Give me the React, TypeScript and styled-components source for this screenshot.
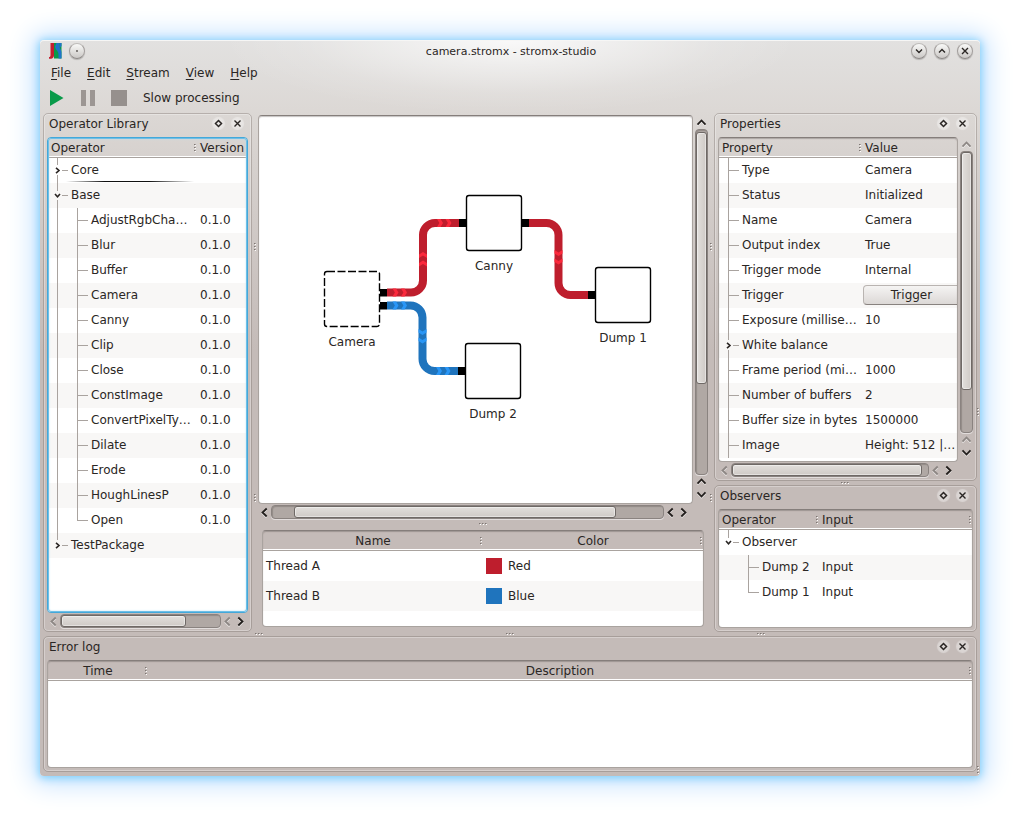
import React from 'react';
import styled, { createGlobalStyle, css } from 'styled-components';

const ink = '#2a2624';
const line = '#a9a39f';
const altRow = '#f8f7f6';

const GlobalStyle = createGlobalStyle`
  * { box-sizing: border-box; }
  body {
    margin: 0;
    background: #fff;
    color: ${ink};
    font: 12px/16px "DejaVu Sans", Verdana, sans-serif;
  }
  button { font: inherit; color: inherit; }
`;

const Desktop = styled.div`
  display: flex;
  min-height: 100vh;
  padding: 40px;
`;

const Window = styled.main`
  position: relative;
  flex: 1;
  min-width: 0;
  display: flex;
  flex-direction: column;
  padding: 0 3px 4px;
  border-radius: 4px;
  background:
    radial-gradient(
      ellipse 290px 74px at 50% 0,
      rgba(255, 255, 255, 0.8),
      rgba(255, 255, 255, 0.45) 35%,
      rgba(255, 255, 255, 0.12) 72%,
      rgba(255, 255, 255, 0)
    ),
    linear-gradient(#e2e1e0 0, #dcd8d5 70px, #d6d1ce 120px, #c4bbb8 310px);
  box-shadow:
    inset 0 1px 0 #f6f6f5,
    0 1px 8px 1px #7dcffa,
    0 1px 26px 7px #c3e0ff;
`;

const TitleBar = styled.header`
  display: grid;
  grid-template-columns: 1fr auto 1fr;
  align-items: center;
  height: 22px;
  padding: 0 4px 0 6px;
`;

const TitleGroup = styled.div<{ $end?: boolean }>`
  display: flex;
  align-items: center;
  gap: 7px;
  justify-content: ${(p) => (p.$end ? 'flex-end' : 'flex-start')};
`;

const Title = styled.h1`
  margin: 0;
  padding-top: 2px;
  font-size: 11px;
  font-weight: normal;
`;

const RoundButton = styled.button`
  display: flex;
  align-items: center;
  justify-content: center;
  width: 16px;
  height: 16px;
  padding: 0;
  border: 1px solid #a19d9b;
  border-top-color: #bfbcba;
  border-bottom-color: #8d8987;
  border-radius: 50%;
  background: linear-gradient(#f9f9f8, #cbc8c6);
  box-shadow: 0 1px 1px rgba(0, 0, 0, 0.2);
`;

const MenuBar = styled.nav`
  display: flex;
  align-items: center;
  height: 22px;
`;

const MenuButton = styled.button`
  padding: 0 8px;
  border: 0;
  background: none;
  &::first-letter {
    text-decoration: underline;
    text-underline-offset: 2px;
  }
`;

const ToolBar = styled.div`
  display: flex;
  align-items: center;
  gap: 15px;
  height: 29px;
  padding: 0 0 1px 6px;
`;

const ToolButton = styled.button<{ $text?: boolean }>`
  display: flex;
  padding: ${(p) => (p.$text ? '0 1px' : '0')};
  border: 0;
  background: none;
`;

const Workspace = styled.div`
  flex: 1;
  display: flex;
  min-height: 0;
`;

const LeftColumn = styled.div`
  display: flex;
  width: 209px;
`;

const CenterColumn = styled.div`
  flex: 1;
  min-width: 0;
  display: flex;
  flex-direction: column;
  padding: 2px 0 5px;
`;

const RightColumn = styled.div`
  display: flex;
  flex-direction: column;
  width: 263px;
`;

const Splitter = styled.div<{ $vertical?: boolean; $size: number }>`
  flex: none;
  display: flex;
  align-items: center;
  justify-content: center;
  gap: 242px;
  overflow: hidden;
  ${(p) =>
    p.$vertical
      ? css`flex-direction: column; width: ${p.$size}px;`
      : css`height: ${p.$size}px;`}
`;

const DockBox = styled.section<{ $height?: number }>`
  display: flex;
  flex-direction: column;
  min-width: 0;
  min-height: 0;
  ${(p) => (p.$height ? css`height: ${p.$height}px;` : css`flex: 1;`)}
  padding: 0 3px 3px;
  border: 1px solid rgba(125, 115, 110, 0.4);
  border-radius: 5px;
  box-shadow: inset 0 0 0 1px rgba(255, 255, 255, 0.3);
`;

const DockTitle = styled.div`
  display: flex;
  align-items: center;
  height: 23px;
  padding: 0 5px 4px 2px;
`;

const DockName = styled.h2`
  flex: 1;
  margin: 0;
  font-size: 12px;
  font-weight: normal;
`;

const DockButton = styled.button`
  display: flex;
  width: 11px;
  height: 11px;
  margin-left: 8px;
  padding: 1px;
  border: 0;
  border-radius: 50%;
  background: rgba(255, 255, 255, 0.4);
  box-shadow: 0 0 1px 1px rgba(255, 255, 255, 0.4);
`;

const ViewGrid = styled.div`
  flex: 1;
  min-height: 0;
  display: grid;
  grid-template-columns: minmax(0, 1fr) auto;
  grid-template-rows: minmax(0, 1fr) auto;
`;

const Frame = styled.div<{ $header?: boolean; $focus?: boolean; $height?: number }>`
  position: relative;
  min-width: 0;
  min-height: 0;
  ${(p) => (p.$height ? css`height: ${p.$height}px; margin: 0 4px;` : css`flex: 1;`)}
  overflow: hidden;
  border: 1px solid ${line};
  border-top-color: #857e7b;
  border-radius: 4px;
  background: ${(p) => (p.$header ? 'linear-gradient(transparent 19px, #fff 19px)' : '#fff')};
  &::after {
    content: '';
    position: absolute;
    inset: 0;
    border-radius: 3px;
    pointer-events: none;
    box-shadow: inset 0 1px 1px rgba(90, 80, 76, 0.35);
  }
  ${(p) =>
    p.$focus &&
    css`
      border-color: #43a8da;
      &::after {
        box-shadow: inset 0 0 0 1px #6fbfe6, inset 0 0 2px 1px #b5e0f3;
      }
    `}
`;

const DataTable = styled.table`
  width: 100%;
  table-layout: fixed;
  border-collapse: separate;
  border-spacing: 0;
`;

const HeaderCell = styled.th<{ $center?: boolean }>`
  position: relative;
  height: 20px;
  padding: 0 3px;
  border-bottom: 1px solid ${line};
  box-shadow: inset 0 -1px 0 #fff;
  font-weight: normal;
  line-height: 18px;
  text-align: ${(p) => (p.$center ? 'center' : 'left')};
`;

const HeaderGrip = styled.span`
  position: absolute;
  top: 6px;
  right: 0;
  display: flex;
`;

const Row = styled.tr<{ $tall?: boolean }>`
  height: ${(p) => (p.$tall ? 30 : 25)}px;
  &:nth-child(even) { background: ${altRow}; }
`;

const Cell = styled.td`
  padding: 0 0 0 3px;
  overflow: hidden;
  white-space: nowrap;
`;

const TreeCell = styled(Cell)`
  padding: 0;
`;

const ValueCell = styled(Cell)`
  padding-bottom: 2px;
`;

const TreeLabel = styled.div<{ $current?: boolean }>`
  display: flex;
  align-items: center;
  height: 25px;
  padding-bottom: 2px;
  ${(p) =>
    p.$current &&
    css`
      background: linear-gradient(90deg, transparent, #111 30%, #111 65%, transparent)
        right 3px bottom 1px / 128px 1px no-repeat;
    `}
`;

const BranchLines = styled.svg`
  flex: none;
  align-self: flex-start;
`;

const SwatchLabel = styled.div`
  display: flex;
  align-items: center;
  gap: 6px;
`;

const Swatch = styled.span<{ $color: string }>`
  width: 16px;
  height: 16px;
  background: ${(p) => p.$color};
`;

const TriggerButton = styled.button`
  display: block;
  width: 97px;
  height: 20px;
  margin-left: -2px;
  padding: 0;
  border: 1px solid #b9b4b1;
  border-bottom-color: #88827f;
  border-radius: 4px;
  background: linear-gradient(#f5f4f3, #dcd8d6);
`;

const Bar = styled.div<{ $vertical?: boolean; $inset?: number }>`
  display: flex;
  align-items: center;
  ${(p) =>
    p.$vertical
      ? css`flex-direction: column; width: 15px; padding: 1px 0 ${p.$inset ?? 0}px 1px;`
      : css`height: 15px; padding: 1px ${p.$inset ?? 0}px 0 0;`}
`;

const Track = styled.div<{ $vertical?: boolean; $parts: number[] }>`
  flex: 1;
  min-width: 0;
  min-height: 0;
  display: grid;
  border: 1px solid #8a8380;
  border-radius: 4px;
  background: #b0a8a4;
  box-shadow: inset 1px 1px 1px rgba(60, 52, 48, 0.25), 0 1px 0 rgba(255, 255, 255, 0.5);
  ${(p) => {
    const tracks = p.$parts.map((n) => `${n}fr`).join(' ');
    return p.$vertical
      ? css`width: 13px; grid-template-rows: ${tracks};`
      : css`height: 14px; grid-template-columns: ${tracks};`;
  }}
`;

const Thumb = styled.div<{ $vertical?: boolean }>`
  border: 1px solid #6f6966;
  border-radius: 3px;
  background: linear-gradient(${(p) => (p.$vertical ? '90deg' : '180deg')}, #e2dfdc, #cfcac6);
  box-shadow: inset 0 0 0 1px rgba(255, 255, 255, 0.45);
  ${(p) => (p.$vertical ? css`grid-row: 2;` : css`grid-column: 2;`)}
`;

const ArrowButton = styled.button`
  flex: none;
  display: flex;
  align-items: center;
  justify-content: center;
  width: 13px;
  height: 13px;
  padding: 0;
  border: 0;
  background: none;
  color: #231f1d;
  filter: drop-shadow(0 1px 0 rgba(255, 255, 255, 0.6));
  &:disabled { color: #8d8784; }
`;

const SizeGrip = styled.span<{ $corner?: boolean }>`
  position: absolute;
  right: 0;
  display: flex;
  ${(p) => (p.$corner ? css`bottom: 1px;` : css`top: 50%;`)}
`;

const Diagram = styled.svg`
  display: block;
  margin: 0 auto;
`;

function Grip({ vertical }: { vertical?: boolean }) {
  const steps = [0, 3, 6];
  return (
    <svg width={vertical ? 3 : 9} height={vertical ? 9 : 3} aria-hidden="true" shapeRendering="crispEdges">
      {steps.map((s) => (
        <g key={s} transform={vertical ? `translate(0 ${s})` : `translate(${s} 0)`}>
          <rect x="1" y="1" width="1" height="1" fill="#fff" />
          <rect width="1" height="1" fill="#7d7673" />
          <rect x="1" width="1" height="1" fill="#a49c98" />
        </g>
      ))}
    </svg>
  );
}

type Dir = 'up' | 'down' | 'left' | 'right';
const angle: Record<Dir, number> = { up: 0, right: 90, down: 180, left: 270 };

function Arrow({ dir, label, disabled }: { dir: Dir; label: string; disabled?: boolean }) {
  return (
    <ArrowButton aria-label={label} disabled={disabled}>
      <svg width="13" height="13" viewBox="0 0 13 13">
        <path
          d="M2.5 8.7 6.5 4.5l4 4.2"
          transform={`rotate(${angle[dir]} 6.5 6.5)`}
          fill="none"
          stroke="currentColor"
          strokeWidth="1.8"
        />
      </svg>
    </ArrowButton>
  );
}

interface ScrollProps {
  vertical?: boolean;
  parts: number[];
  inset?: number;
  atStart?: boolean;
}

function ScrollBar({ vertical, parts, inset, atStart }: ScrollProps) {
  const back: Dir = vertical ? 'up' : 'left';
  const next: Dir = vertical ? 'down' : 'right';
  return (
    <Bar $vertical={vertical} $inset={inset}>
      <Arrow dir={back} label={`Scroll ${back}`} disabled={atStart} />
      <Track $vertical={vertical} $parts={parts}>
        <Thumb $vertical={vertical} />
      </Track>
      <Arrow dir={back} label={`Scroll ${back}`} disabled={atStart} />
      <Arrow dir={next} label={`Scroll ${next}`} />
    </Bar>
  );
}

interface DockProps {
  title: string;
  height?: number;
  children: React.ReactNode;
}

function Dock({ title, height, children }: DockProps) {
  return (
    <DockBox $height={height} aria-label={title}>
      <DockTitle>
        <DockName>{title}</DockName>
        <DockButton aria-label={`Float ${title}`}>
          <svg width="9" height="9" viewBox="0 0 9 9">
            <path d="M4.5 1.5l3 3-3 3-3-3z" fill="none" stroke={ink} strokeWidth="1.5" />
          </svg>
        </DockButton>
        <DockButton aria-label={`Close ${title}`}>
          <svg width="9" height="9" viewBox="0 0 9 9">
            <path d="M1.5 1.5l6 6M7.5 1.5l-6 6" fill="none" stroke={ink} strokeWidth="1.4" />
          </svg>
        </DockButton>
      </DockTitle>
      {children}
    </DockBox>
  );
}

interface BranchProps {
  depth: number;
  arrow?: 'open' | 'closed';
  trunk: 'none' | 'top' | 'full';
  last?: boolean;
}

function Branch({ depth, arrow, trunk, last }: BranchProps) {
  const x = 9 + depth * 20;
  const width = 23 + depth * 20;
  return (
    <BranchLines width={width} height="25" shapeRendering="crispEdges" aria-hidden="true">
      <g fill={line}>
        {depth > 0 && trunk === 'full' && <rect x="9" width="1" height="25" />}
        {arrow ? (
          <>
            <rect x={x} width="1" height={arrow === 'open' ? 8 : 7} />
            {trunk === 'full' && <rect x={x} y="17" width="1" height="8" />}
            <rect x={x + 5} y="12" width="6" height="1" />
          </>
        ) : (
          <>
            <rect x={x} width="1" height={last ? 13 : 25} />
            <rect x={x} y="12" width="11" height="1" />
          </>
        )}
      </g>
      {arrow && (
        <path
          d={arrow === 'open' ? 'M7 11l2.5 2.7L12 11' : 'M8 9.8l3 2.7-3 2.7'}
          fill="none"
          stroke={ink}
          strokeWidth="1.6"
          shapeRendering="auto"
        />
      )}
    </BranchLines>
  );
}

function Head({ labels, center, openEnd }: { labels: string[]; center?: boolean; openEnd?: boolean }) {
  return (
    <thead>
      <tr>
        {labels.map((label, i) => (
          <HeaderCell key={label} scope="col" $center={center}>
            {label}
            {!(openEnd && i === labels.length - 1) && (
              <HeaderGrip>
                <Grip vertical />
              </HeaderGrip>
            )}
          </HeaderCell>
        ))}
      </tr>
    </thead>
  );
}

const operators = [
  'AdjustRgbCha…', 'Blur', 'Buffer', 'Camera', 'Canny', 'Clip', 'Close',
  'ConstImage', 'ConvertPixelTy…', 'Dilate', 'Erode', 'HoughLinesP', 'Open',
];

const properties: [string, string][] = [
  ['Type', 'Camera'],
  ['Status', 'Initialized'],
  ['Name', 'Camera'],
  ['Output index', 'True'],
  ['Trigger mode', 'Internal'],
  ['Trigger', ''],
  ['Exposure (millise…', '10'],
  ['White balance', ''],
  ['Frame period (mi…', '1000'],
  ['Number of buffers', '2'],
  ['Buffer size in bytes', '1500000'],
  ['Image', 'Height: 512 |…'],
];

const threads = [
  { name: 'Thread A', color: '#be1e2d', label: 'Red' },
  { name: 'Thread B', color: '#1f74bd', label: 'Blue' },
];

function OperatorTree() {
  return (
    <DataTable aria-label="Operators">
      <colgroup>
        <col />
        <col style={{ width: 50 }} />
      </colgroup>
      <Head labels={['Operator', 'Version']} openEnd />
      <tbody>
        <Row>
          <TreeCell>
            <TreeLabel $current><Branch depth={0} arrow="closed" trunk="full" />Core</TreeLabel>
          </TreeCell>
          <ValueCell />
        </Row>
        <Row>
          <TreeCell>
            <TreeLabel><Branch depth={0} arrow="open" trunk="full" />Base</TreeLabel>
          </TreeCell>
          <ValueCell />
        </Row>
        {operators.map((name, i) => (
          <Row key={name}>
            <TreeCell>
              <TreeLabel>
                <Branch depth={1} trunk="full" last={i === operators.length - 1} />
                {name}
              </TreeLabel>
            </TreeCell>
            <ValueCell>0.1.0</ValueCell>
          </Row>
        ))}
        <Row>
          <TreeCell>
            <TreeLabel><Branch depth={0} arrow="closed" trunk="top" />TestPackage</TreeLabel>
          </TreeCell>
          <ValueCell />
        </Row>
      </tbody>
    </DataTable>
  );
}

function PropertyTree() {
  return (
    <DataTable aria-label="Properties">
      <colgroup>
        <col style={{ width: 143 }} />
        <col />
      </colgroup>
      <Head labels={['Property', 'Value']} openEnd />
      <tbody>
        {properties.map(([name, value]) => (
          <Row key={name}>
            <TreeCell>
              <TreeLabel>
                <Branch depth={0} trunk="full" arrow={name === 'White balance' ? 'closed' : undefined} />
                {name}
              </TreeLabel>
            </TreeCell>
            <ValueCell>{name === 'Trigger' ? <TriggerButton>Trigger</TriggerButton> : value}</ValueCell>
          </Row>
        ))}
      </tbody>
    </DataTable>
  );
}

function ObserverTree() {
  return (
    <DataTable aria-label="Observers">
      <colgroup>
        <col style={{ width: 100 }} />
        <col />
      </colgroup>
      <Head labels={['Operator', 'Input']} />
      <tbody>
        <Row>
          <TreeCell>
            <TreeLabel><Branch depth={0} arrow="open" trunk="top" />Observer</TreeLabel>
          </TreeCell>
          <ValueCell />
        </Row>
        {['Dump 2', 'Dump 1'].map((name, i) => (
          <Row key={name}>
            <TreeCell>
              <TreeLabel><Branch depth={1} trunk="none" last={i === 1} />{name}</TreeLabel>
            </TreeCell>
            <ValueCell>Input</ValueCell>
          </Row>
        ))}
      </tbody>
    </DataTable>
  );
}

function ThreadTable() {
  return (
    <DataTable aria-label="Threads">
      <Head labels={['Name', 'Color']} center />
      <tbody>
        {threads.map((t) => (
          <Row key={t.name} $tall>
            <Cell>{t.name}</Cell>
            <Cell>
              <SwatchLabel><Swatch $color={t.color} />{t.label}</SwatchLabel>
            </Cell>
          </Row>
        ))}
      </tbody>
    </DataTable>
  );
}

function Chevrons({ x, y, turn = 0, color }: { x: number; y: number; turn?: number; color: string }) {
  const d = 'h3.6l2.4 4-2.4 4h-3.6l2.4-4z';
  return <path d={`M-8-4${d}M.5-4${d}`} transform={`translate(${x} ${y}) rotate(${turn})`} fill={color} />;
}

const nodes = [
  { name: 'Camera', x: 324, y: 271, dashed: true },
  { name: 'Canny', x: 466, y: 195 },
  { name: 'Dump 1', x: 595, y: 267 },
  { name: 'Dump 2', x: 465, y: 343 },
];

const ports = [
  [380, 289], [380, 302], [459, 219], [522, 219], [588, 291], [458, 367],
];

function StreamDiagram() {
  return (
    <Diagram width="433" height="386" viewBox="259 116 433 386" role="img" aria-label="Stream">
      <g fill="none" strokeWidth="8">
        <path stroke="#be1e2d" d="M387 292.500H411a12 12 0 0 0 12-12V235a12 12 0 0 1 12-12H459" />
        <path stroke="#be1e2d" d="M529 223H546.500a12 12 0 0 1 12 12V283a12 12 0 0 0 12 12H588" />
        <path stroke="#1f74bd" d="M387 305.500H410.500a12 12 0 0 1 12 12V359a12 12 0 0 0 12 12H458" />
      </g>
      <Chevrons x={400.5} y={292.5} color="#fb293c" />
      <Chevrons x={423} y={258.5} turn={-90} color="#fb293c" />
      <Chevrons x={445} y={223} color="#fb293c" />
      <Chevrons x={558.5} y={258} turn={90} color="#fb293c" />
      <Chevrons x={400.5} y={305.5} color="#2996f6" />
      <Chevrons x={422.5} y={337} turn={90} color="#2996f6" />
      <Chevrons x={444} y={371} color="#2996f6" />
      {ports.map(([x, y]) => (
        <rect key={`${x}-${y}`} x={x} y={y} width="7" height={x === 380 ? 7.5 : 8} />
      ))}
      {nodes.map((n) => (
        <g key={n.name}>
          <rect
            x={n.x + 0.5}
            y={n.y + 0.5}
            width="55"
            height="55"
            rx="2.5"
            fill="#fff"
            stroke="#000"
            strokeWidth="1.4"
            strokeDasharray={n.dashed ? '8 2.5' : undefined}
          />
          <text x={n.x + 28} y={n.y + 75} textAnchor="middle" fill={ink}>{n.name}</text>
        </g>
      ))}
    </Diagram>
  );
}

function Logo() {
  return (
    <svg width="13" height="16" viewBox="0 0 13 16" aria-hidden="true">
      <path d="M5 0h7.500v15.500H5z" fill="#0a9a4a" />
      <path d="M7.500 0h3v3.500c0 2 2 3.500 2 6v6H9.500V11C9.500 8 6 6.500 6 3.500z" fill="#1f74c8" />
      <path d="M10.500 0h2v3l-2 2z" fill="#1f74c8" />
      <path d="M1.500 0H5v12.500c0 2-1.500 3.200-3 3.200H0V14c1.200 0 1.500-.6 1.500-2z" fill="#c41f30" />
    </svg>
  );
}

const windowIcons = [
  { label: 'Minimize', d: 'M2 3.500l3 3 3-3' },
  { label: 'Maximize', d: 'M2 6.500l3-3 3 3' },
  { label: 'Close', d: 'M2 2l6 6M8 2L2 8' },
];

export default function App() {
  return (
    <Desktop>
      <GlobalStyle />
      <Window>
        <TitleBar>
          <TitleGroup>
            <Logo />
            <RoundButton aria-label="On all desktops">
              <svg width="10" height="10"><circle cx="5" cy="5" r="0.9" fill="#55504d" /></svg>
            </RoundButton>
          </TitleGroup>
          <Title>camera.stromx - stromx-studio</Title>
          <TitleGroup $end>
            {windowIcons.map((icon) => (
              <RoundButton key={icon.label} aria-label={icon.label}>
                <svg width="10" height="10">
                  <path d={icon.d} fill="none" stroke={ink} strokeWidth="1.4" />
                </svg>
              </RoundButton>
            ))}
          </TitleGroup>
        </TitleBar>

        <MenuBar aria-label="Main menu">
          {['File', 'Edit', 'Stream', 'View', 'Help'].map((item) => (
            <MenuButton key={item}>{item}</MenuButton>
          ))}
        </MenuBar>

        <ToolBar>
          <ToolButton aria-label="Start">
            <svg width="16" height="16"><path d="M1 0l13.500 8L1 16z" fill="#0a9a4a" /></svg>
          </ToolButton>
          <ToolButton aria-label="Pause">
            <svg width="16" height="16"><path d="M1 0h5v16H1zM10 0h5v16h-5z" fill="#9c9693" /></svg>
          </ToolButton>
          <ToolButton aria-label="Stop">
            <svg width="16" height="16"><path d="M0 0h16v16H0z" fill="#96908d" /></svg>
          </ToolButton>
          <ToolButton $text>Slow processing</ToolButton>
        </ToolBar>

        <Workspace>
          <LeftColumn>
            <Dock title="Operator Library">
              <Frame $header $focus>
                <OperatorTree />
              </Frame>
              <ScrollBar parts={[0, 126, 34]} inset={1} atStart />
            </Dock>
          </LeftColumn>

          <Splitter $vertical $size={6}>
            <Grip vertical />
            <Grip vertical />
          </Splitter>

          <CenterColumn>
            <ViewGrid>
              <Frame>
                <StreamDiagram />
              </Frame>
              <ScrollBar vertical parts={[2, 253, 90]} inset={3} />
              <ScrollBar parts={[22, 323, 47]} inset={3} />
            </ViewGrid>
            <Splitter $size={11}>
              <Grip />
            </Splitter>
            <Frame $header $height={97}>
              <ThreadTable />
            </Frame>
          </CenterColumn>

          <Splitter $vertical $size={6}>
            <Grip vertical />
            <Grip vertical />
          </Splitter>

          <RightColumn>
            <Dock title="Properties">
              <ViewGrid>
                <Frame $header>
                  <PropertyTree />
                </Frame>
                <ScrollBar vertical parts={[0, 239, 42]} inset={3} atStart />
                <ScrollBar parts={[0, 191, 6]} inset={3} atStart />
              </ViewGrid>
            </Dock>
            <Splitter $size={4}>
              <Grip />
            </Splitter>
            <Dock title="Observers" height={147}>
              <Frame $header>
                <ObserverTree />
              </Frame>
            </Dock>
          </RightColumn>
        </Workspace>

        <Splitter $size={4}>
          <Grip />
          <Grip />
          <Grip />
        </Splitter>

        <Dock title="Error log" height={136}>
          <Frame $header>
            <DataTable aria-label="Error log">
              <colgroup>
                <col style={{ width: 100 }} />
                <col />
              </colgroup>
              <Head labels={['Time', 'Description']} center />
            </DataTable>
          </Frame>
        </Dock>

        <SizeGrip><Grip vertical /></SizeGrip>
        <SizeGrip $corner><Grip vertical /></SizeGrip>
      </Window>
    </Desktop>
  );
}
